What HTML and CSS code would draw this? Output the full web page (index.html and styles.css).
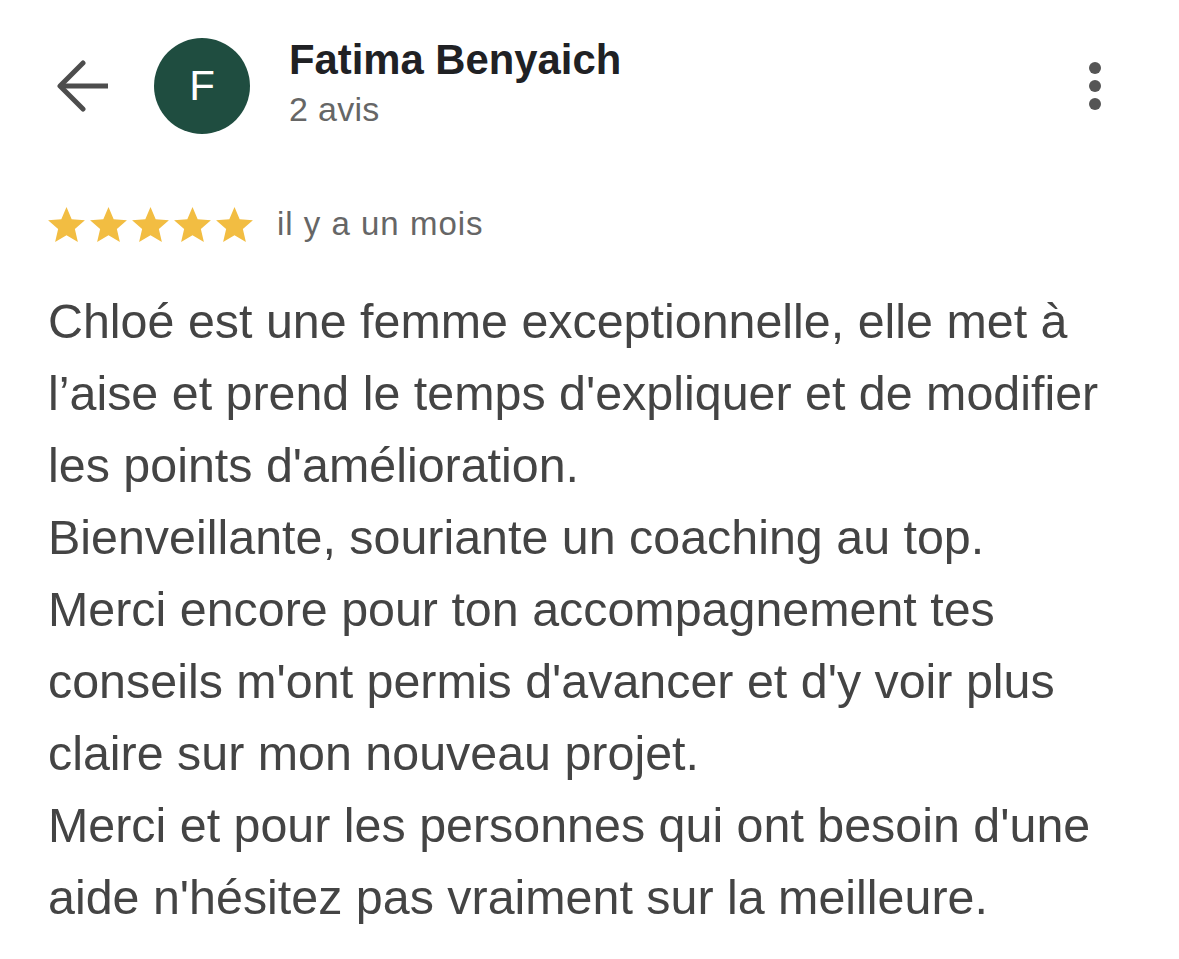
FILE: index.html
```html
<!DOCTYPE html>
<html lang="fr">
<head>
    <meta charset="UTF-8">
    <meta name="viewport" content="width=device-width, initial-scale=1.0">
    <title>Avis - Fatima Benyaich</title>
    <link rel="stylesheet" href="styles.css">
</head>
<body>
    <div class="review">
        <div class="header">
            <svg class="back-icon" viewBox="0 0 52 52" width="52" height="52">
                <polyline points="27,3 4,26 27,49" fill="none" stroke="#4d4d4d" stroke-width="5" stroke-linecap="round" stroke-linejoin="round"/>
                <line x1="5" y1="26" x2="52" y2="26" stroke="#4d4d4d" stroke-width="5"/>
            </svg>
            <div class="avatar">F</div>
            <div class="author">
                <div class="author-name">Fatima Benyaich</div>
                <div class="author-count">2 avis</div>
            </div>
            <svg class="menu-icon" viewBox="0 0 12 48" width="12" height="48">
                <circle cx="6" cy="6" r="6" fill="#555"/>
                <circle cx="6" cy="24" r="6" fill="#555"/>
                <circle cx="6" cy="42" r="6" fill="#555"/>
            </svg>
        </div>

        <div class="rating">
            <div class="stars">
                <svg viewBox="2 2 20 19" width="37" height="35"><path d="M12 17.27L18.18 21l-1.64-7.03L22 9.24l-7.19-.61L12 2 9.19 8.63 2 9.24l5.46 4.73L5.820 21z"/></svg>
                <svg viewBox="2 2 20 19" width="37" height="35"><path d="M12 17.27L18.18 21l-1.64-7.03L22 9.24l-7.19-.61L12 2 9.19 8.63 2 9.24l5.46 4.73L5.82 21z"/></svg>
                <svg viewBox="2 2 20 19" width="37" height="35"><path d="M12 17.27L18.18 21l-1.64-7.03L22 9.24l-7.19-.61L12 2 9.19 8.63 2 9.24l5.46 4.73L5.82 21z"/></svg>
                <svg viewBox="2 2 20 19" width="37" height="35"><path d="M12 17.27L18.18 21l-1.64-7.03L22 9.24l-7.19-.61L12 2 9.19 8.63 2 9.24l5.46 4.73L5.82 21z"/></svg>
                <svg viewBox="2 2 20 19" width="37" height="35"><path d="M12 17.27L18.18 21l-1.64-7.03L22 9.24l-7.19-.61L12 2 9.19 8.63 2 9.24l5.46 4.73L5.82 21z"/></svg>
            </div>
            <span class="date">il y a un mois</span>
        </div>

        <p class="review-text">Chloé est une femme exceptionnelle, elle met à<br>
l’aise et prend le temps d'expliquer et de modifier<br>
les points d'amélioration.<br>
Bienveillante, souriante un coaching au top.<br>
Merci encore pour ton accompagnement tes<br>
conseils m'ont permis d'avancer et d'y voir plus<br>
claire sur mon nouveau projet.<br>
Merci et pour les personnes qui ont besoin d'une<br>
aide n'hésitez pas vraiment sur la meilleure.</p>
    </div>
</body>
</html>
```

FILE: styles.css
```css
body {
    margin: 0;
    background-color: #fff;
    font-family: "Liberation Sans", Arial, sans-serif;
    color: #444;
}
.review {
    padding: 38px 0 0 48px;
}
.header {
    display: flex;
    align-items: flex-start;
}
.back-icon {
    margin: 22px 0 0 8px;
    flex-shrink: 0;
}
.avatar {
    width: 96px;
    height: 96px;
    margin-left: 46px;
    border-radius: 50%;
    background-color: #1f4d40;
    color: #fff;
    font-size: 42px;
    line-height: 96px;
    text-align: center;
    flex-shrink: 0;
}
.author {
    margin: -2px 0 0 39px;
}
.author-name {
    font-size: 41.8px;
    font-weight: bold;
    line-height: 48px;
    color: #202124;
}
.author-count {
    margin-top: 5px;
    font-size: 34px;
    line-height: 40px;
    letter-spacing: 0.3px;
    color: #666;
}
.menu-icon {
    margin: 24px 78px 0 auto;
    flex-shrink: 0;
}
.rating {
    display: flex;
    align-items: center;
    margin-top: 72px;
}
.stars {
    display: flex;
    gap: 5px;
    fill: #f2bd42;
}
.date {
    margin-left: 24px;
    font-size: 33px;
    line-height: 36px;
    letter-spacing: 1px;
    color: #666;
}
.review-text {
    margin: 43px 0 0;
    font-size: 48.4px;
    line-height: 72px;
    color: #444;
    white-space: nowrap;
}
```
